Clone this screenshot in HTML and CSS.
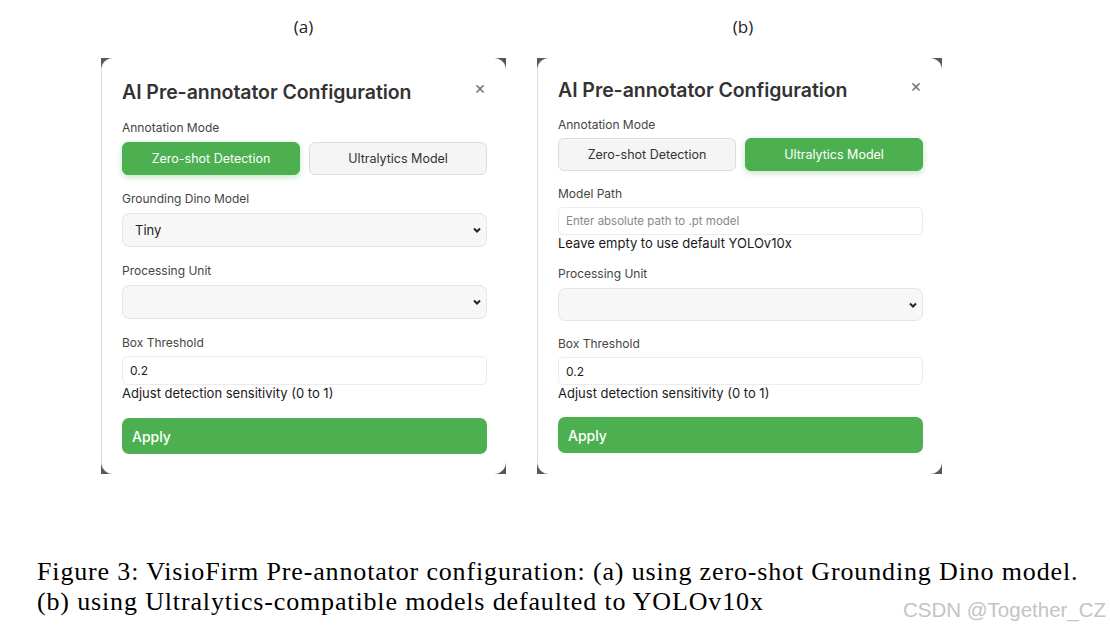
FILE: index.html
```html
<!DOCTYPE html>
<html>
<head>
<meta charset="utf-8">
<link rel="stylesheet" href="styles.css">
</head>
<body>
<div class="figure">
  <div class="panels">
    <div class="col">
      <div class="sub-label">(a)</div>
      <div class="frame">
        <div class="card">
          <div class="head">
            <h2 class="title">AI Pre-annotator Configuration</h2>
            <span class="close">×</span>
          </div>
          <div class="label">Annotation Mode</div>
          <div class="modes">
            <div class="mode active">Zero-shot Detection</div>
            <div class="mode">Ultralytics Model</div>
          </div>
          <div class="label gap">Grounding Dino Model</div>
          <div class="select">
            <span>Tiny</span>
            <svg class="chev" width="10" height="8" viewBox="0 0 10 8"><path d="M2 2.5 L5 5.5 L8 2.5" fill="none" stroke="#222" stroke-width="2"/></svg>
          </div>
          <div class="label gap">Processing Unit</div>
          <div class="select">
            <span></span>
            <svg class="chev" width="10" height="8" viewBox="0 0 10 8"><path d="M2 2.5 L5 5.5 L8 2.5" fill="none" stroke="#222" stroke-width="2"/></svg>
          </div>
          <div class="label gap">Box Threshold</div>
          <div class="input">0.2</div>
          <div class="help">Adjust detection sensitivity (0 to 1)</div>
          <div class="apply">Apply</div>
        </div>
      </div>
    </div>
    <div class="col col-b">
      <div class="sub-label">(b)</div>
      <div class="frame">
        <div class="card card-b">
          <div class="head">
            <h2 class="title">AI Pre-annotator Configuration</h2>
            <span class="close">×</span>
          </div>
          <div class="label">Annotation Mode</div>
          <div class="modes">
            <div class="mode">Zero-shot Detection</div>
            <div class="mode active">Ultralytics Model</div>
          </div>
          <div class="label gap">Model Path</div>
          <div class="input placeholder">Enter absolute path to .pt model</div>
          <div class="help">Leave empty to use default YOLOv10x</div>
          <div class="label gap">Processing Unit</div>
          <div class="select">
            <span></span>
            <svg class="chev" width="10" height="8" viewBox="0 0 10 8"><path d="M2 2.5 L5 5.5 L8 2.5" fill="none" stroke="#222" stroke-width="2"/></svg>
          </div>
          <div class="label gap">Box Threshold</div>
          <div class="input">0.2</div>
          <div class="help">Adjust detection sensitivity (0 to 1)</div>
          <div class="apply">Apply</div>
        </div>
      </div>
    </div>
  </div>
  <p class="caption">Figure 3: VisioFirm Pre-annotator configuration: (a) using zero-shot Grounding Dino model.<br>(b) using Ultralytics-compatible models defaulted to YOLOv10x</p>
  <div class="watermark">CSDN @Together_CZ</div>
</div>
</body>
</html>
```
FILE: styles.css
```css
html, body {
  margin: 0;
  padding: 0;
  background: #fff;
}
.figure {
  position: relative;
  width: 1110px;
  height: 630px;
  padding-top: 16px;
  box-sizing: border-box;
}
.panels {
  display: flex;
  gap: 31px;
  padding-left: 101px;
}
.col {
  width: 405px;
  display: flex;
  flex-direction: column;
  align-items: center;
}
.sub-label {
  font-family: "Open Sans", "Liberation Sans", sans-serif;
  font-size: 17px;
  line-height: 22px;
  color: #222;
  margin-bottom: 20px;
}
.col-b .sub-label {
  padding-left: 7px;
}
.frame {
  width: 405px;
  height: 416px;
  background: #5a5650;
}
.card {
  height: 100%;
  box-sizing: border-box;
  background: #fff;
  border-radius: 12px;
  border-left: 1px solid #dcdcdc;
  padding: 22px 19px 19px 20px;
  display: flex;
  flex-direction: column;
  font-family: Inter, "Liberation Sans", sans-serif;
}
.card-b {
  padding-top: 20px;
}
.head {
  display: flex;
  justify-content: space-between;
  align-items: center;
  height: 24px;
}
.title {
  margin: 0;
  font-size: 19.5px;
  line-height: 24px;
  font-weight: 600;
  color: #333;
  letter-spacing: -0.05px;
}
.close {
  font-size: 18px;
  color: #777;
  line-height: 18px;
  margin-right: 1px;
  margin-top: -8px;
}
.label {
  margin-top: 16px;
  font-size: 12px;
  line-height: 16px;
  color: #444;
  margin-bottom: 6px;
}
.card-b .label {
  margin-top: 15px;
}
.card-b .label + .modes {
  margin-top: -1px;
}
.modes {
  display: flex;
  gap: 9px;
}
.mode {
  flex: 1;
  height: 33px;
  box-sizing: border-box;
  border-radius: 6px;
  background: #f5f5f5;
  border: 1px solid #dcdcdc;
  display: flex;
  align-items: center;
  justify-content: center;
  font-size: 12.5px;
  color: #333;
}
.mode.active {
  background: #4caf50;
  border-color: #4caf50;
  color: #fff;
  box-shadow: 0 2px 6px rgba(76, 175, 80, 0.35);
}
.select {
  height: 34px;
  box-sizing: border-box;
  background: #f7f7f7;
  border: 1px solid #e6e6e6;
  border-radius: 7px;
  display: flex;
  align-items: center;
  justify-content: space-between;
  padding: 0 4px 0 12px;
  font-size: 13px;
  color: #222;
}
.card-b .select {
  height: 33px;
}
.input {
  height: 29px;
  box-sizing: border-box;
  background: #fff;
  border: 1px solid #ececec;
  border-radius: 5px;
  display: flex;
  align-items: center;
  padding: 0 7px;
  font-size: 12px;
  color: #222;
  margin-top: -1px;
}
.card-b .input {
  height: 28px;
}
.input.placeholder {
  color: #888;
  font-size: 11.5px;
}
.help {
  font-size: 13px;
  line-height: 16px;
  color: #1a1a1a;
}
.apply {
  margin-top: 17px;
  height: 36px;
  border-radius: 7px;
  background: #4caf50;
  color: #fff;
  font-size: 14px;
  font-weight: 500;
  display: flex;
  align-items: center;
  padding-left: 10px;
}
.card-b .apply {
  margin-top: 16px;
}
.caption {
  margin: 83px 0 0 37px;
  font-family: "Liberation Serif", serif;
  font-size: 26px;
  line-height: 30px;
  letter-spacing: 0.85px;
  color: #000;
  white-space: nowrap;
}
.watermark {
  position: absolute;
  left: 903px;
  top: 597px;
  font-family: "Liberation Sans", sans-serif;
  font-size: 20.5px;
  line-height: 26px;
  color: #c4c4c4;
}
```
